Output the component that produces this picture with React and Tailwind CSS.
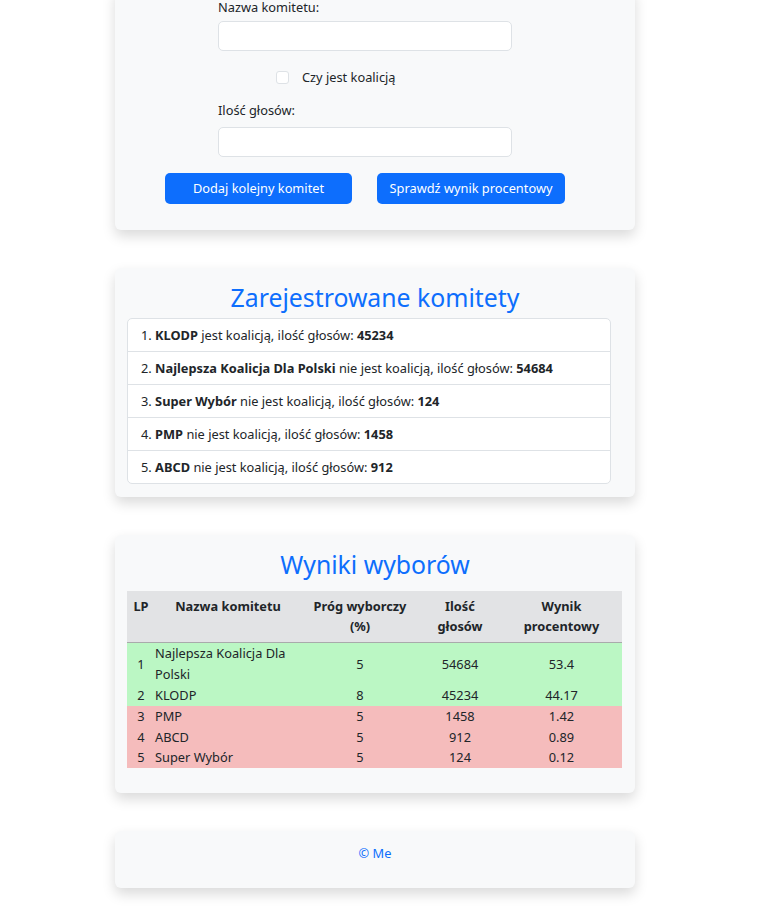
const committees = [
  { name: 'KLODP', coalition: true, votes: 45234 },
  { name: 'Najlepsza Koalicja Dla Polski', coalition: false, votes: 54684 },
  { name: 'Super Wybór', coalition: false, votes: 124 },
  { name: 'PMP', coalition: false, votes: 1458 },
  { name: 'ABCD', coalition: false, votes: 912 },
];

const results = [
  { lp: 1, name: 'Najlepsza Koalicja Dla Polski', threshold: 5, votes: 54684, pct: '53.4', passed: true },
  { lp: 2, name: 'KLODP', threshold: 8, votes: 45234, pct: '44.17', passed: true },
  { lp: 3, name: 'PMP', threshold: 5, votes: 1458, pct: '1.42', passed: false },
  { lp: 4, name: 'ABCD', threshold: 5, votes: 912, pct: '0.89', passed: false },
  { lp: 5, name: 'Super Wybór', threshold: 5, votes: 124, pct: '0.12', passed: false },
];

function Card({ className = '', children }) {
  return (
    <div className={`w-[520px] ml-[115px] rounded-[6px] bg-[#f8f9fa] shadow-[0_6px_13px_rgba(0,0,0,0.15)] ${className}`}>
      {children}
    </div>
  );
}

export default function App() {
  return (
    <div className="min-h-[915px] bg-white text-[#212529] text-[12.8px] leading-[19.2px]" style={{ fontFamily: '"Noto Sans", sans-serif' }}>
      <div className="flex flex-col gap-[38px] pb-[27px]">
        {/* form card (scrolled, top cut off) */}
        <Card className="mt-[-12px] pb-[26px]">
          <div className="pl-[103px] pt-[10px]">
            <label className="block mb-[4px]">Nazwa komitetu:</label>
            <div className="w-[294px] h-[30px] bg-white border border-[#dee2e6] rounded-[5px]" />
            <div className="flex items-center mt-[19px] ml-[58px] h-[14px]">
              <span className="w-[13px] h-[13px] bg-white border border-[#dee2e6] rounded-[3px]" />
              <span className="ml-[13px]">Czy jest koalicją</span>
            </div>
            <label className="block mt-[17px] mb-[7px]">Ilość głosów:</label>
            <div className="w-[294px] h-[30px] bg-white border border-[#dee2e6] rounded-[5px]" />
          </div>
          <div className="flex gap-[25px] pl-[50px] mt-[16px]">
            <button className="w-[187px] h-[31px] rounded-[5px] bg-[#0d6efd] text-white text-[12.8px]">Dodaj kolejny komitet</button>
            <button className="w-[188px] h-[31px] rounded-[5px] bg-[#0d6efd] text-white text-[12.8px]">Sprawdź wynik procentowy</button>
          </div>
        </Card>

        {/* registered committees */}
        <Card className="pt-[14px] pb-[13px] px-[12px]">
          <h2 className="text-center text-[#0d6efd] text-[24.8px] leading-[31px] mb-[5px]">Zarejestrowane komitety</h2>
          <ol className="w-[484px] bg-white border border-[#dee2e6] rounded-[5px]">
            {committees.map((c, i) => (
              <li key={c.name} className={`px-[13px] py-[6.4px] ${i > 0 ? 'border-t border-[#dee2e6]' : ''}`}>
                {i + 1}. <b>{c.name}</b> {c.coalition ? 'jest koalicją' : 'nie jest koalicją'}, ilość głosów: <b>{c.votes}</b>
              </li>
            ))}
          </ol>
        </Card>

        {/* results */}
        <Card className="pt-[14px] pb-[25px] px-[12px]">
          <h2 className="text-center text-[#0d6efd] text-[24.8px] leading-[31px] mb-[11px]">Wyniki wyborów</h2>
          <table className="w-[495px] table-fixed border-collapse">
            <colgroup>
              <col className="w-[28px]" />
              <col className="w-[146px]" />
              <col className="w-[118px]" />
              <col className="w-[82px]" />
              <col className="w-[121px]" />
            </colgroup>
            <thead>
              <tr className="bg-[#e2e3e5] border-b border-[#a9aaab] align-top">
                <th className="pt-[6px] pb-[6px] font-bold leading-[19.5px]">LP</th>
                <th className="pt-[6px] pb-[6px] font-bold leading-[19.5px]">Nazwa komitetu</th>
                <th className="pt-[6px] pb-[6px] font-bold leading-[19.5px] px-[10px]">Próg wyborczy (%)</th>
                <th className="pt-[6px] pb-[6px] font-bold leading-[19.5px] px-[18px]">Ilość głosów</th>
                <th className="pt-[6px] pb-[6px] font-bold leading-[19.5px] px-[18px]">Wynik procentowy</th>
              </tr>
            </thead>
            <tbody>
              {results.map((r) => (
                <tr key={r.lp} className={r.passed ? 'bg-[#bbf7c4]' : 'bg-[#f5bcbc]'}>
                  <td className="text-center p-0 leading-[20.8px]">{r.lp}</td>
                  <td className="text-left p-0 leading-[20.8px]">{r.name}</td>
                  <td className="text-center p-0 leading-[20.8px]">{r.threshold}</td>
                  <td className="text-center p-0 leading-[20.8px]">{r.votes}</td>
                  <td className="text-center p-0 leading-[20.8px]">{r.pct}</td>
                </tr>
              ))}
            </tbody>
          </table>
        </Card>

        {/* footer */}
        <Card className="pt-[13px] pb-[25px] text-center">
          <p className="text-[#0d6efd]">© Me</p>
        </Card>
      </div>
    </div>
  );
}
